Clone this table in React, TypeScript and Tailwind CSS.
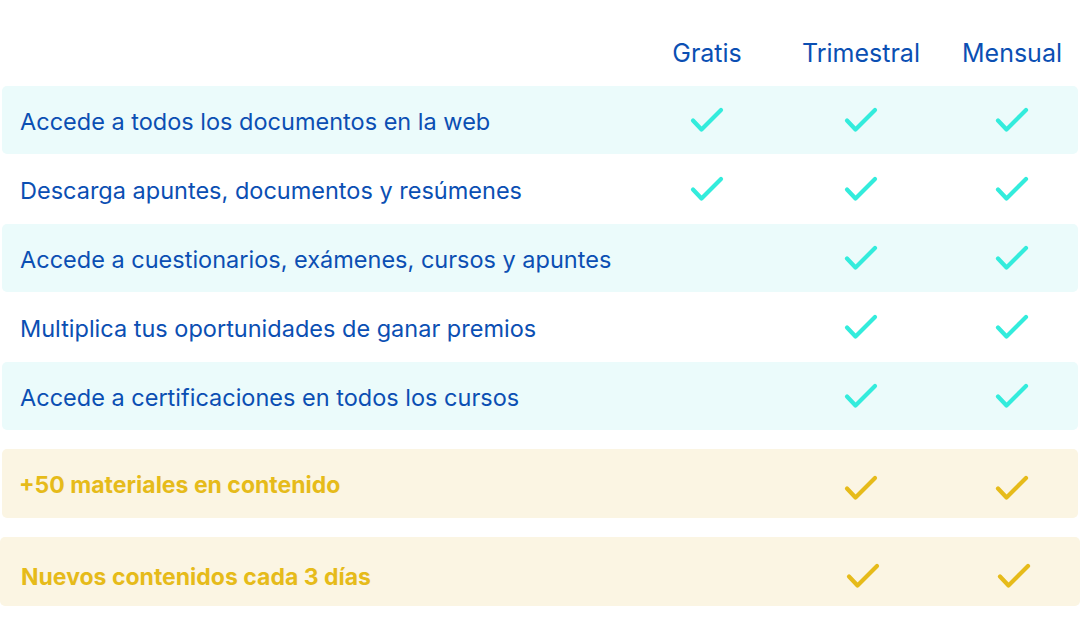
import React from "react";

type Row = {
  label: string;
  gratis: boolean;
  shaded: boolean;
};

const features: Row[] = [
  { label: "Accede a todos los documentos en la web", gratis: true, shaded: true },
  { label: "Descarga apuntes, documentos y resúmenes", gratis: true, shaded: false },
  { label: "Accede a cuestionarios, exámenes, cursos y apuntes", gratis: false, shaded: true },
  { label: "Multiplica tus oportunidades de ganar premios", gratis: false, shaded: false },
  { label: "Accede a certificaciones en todos los cursos", gratis: false, shaded: true },
];

const extras = ["+50 materiales en contenido", "Nuevos contenidos cada 3 días"];

function Check({ color }: { color: string }) {
  return (
    <svg width="36" height="28" viewBox="0 0 36 28" fill="none">
      <path
        d="M4 14.5 L12.5 23.5 L32 4"
        stroke={color}
        strokeWidth="4.2"
        strokeLinecap="round"
        strokeLinejoin="round"
      />
    </svg>
  );
}

const grid = "grid grid-cols-[1fr_138px_170px_132px] items-center";

export default function App() {
  return (
    <div className="w-[1080px] h-[643px] bg-white font-['Inter','Liberation_Sans',sans-serif] text-[23.5px]">
      <div className={`${grid} h-[86px] pb-[18px] items-end text-[#0b4fb3] text-[25px] mx-[2px]`}>
        <div />
        <div className="text-center leading-[30px]">Gratis</div>
        <div className="text-center leading-[30px]">Trimestral</div>
        <div className="text-center leading-[30px]">Mensual</div>
      </div>

      <div className="flex flex-col gap-[1px] mx-[2px]">
        {features.map((f) => (
          <div
            key={f.label}
            className={`${grid} h-[68px] rounded-[5px] ${f.shaded ? "bg-[#ebfbfb]" : ""}`}
          >
            <div className="pl-[18px] pt-[3px] text-[#0b4fb3]">{f.label}</div>
            <div className="flex justify-center">{f.gratis && <Check color="#33ecdc" />}</div>
            <div className="flex justify-center">
              <Check color="#33ecdc" />
            </div>
            <div className="flex justify-center">
              <Check color="#33ecdc" />
            </div>
          </div>
        ))}
      </div>

      <div className="flex flex-col gap-[19px] mt-[19px]">
        {extras.map((label, i) => (
          <div
            key={label}
            className={`${grid} h-[69px] rounded-[5px] bg-[#fbf5e3] ${i === 0 ? "mx-[2px]" : ""}`}
          >
            <div
              className={`${i === 0 ? "pl-[17px] pt-[4px]" : "pl-[21px] pt-[12px]"} font-bold text-[23px] text-[#e6bb1a]`}
            >
              {label}
            </div>
            <div />
            <div className="flex justify-center pt-[8px]">
              <Check color="#e6bb1a" />
            </div>
            <div className="flex justify-center pt-[8px]">
              <Check color="#e6bb1a" />
            </div>
          </div>
        ))}
      </div>
    </div>
  );
}
